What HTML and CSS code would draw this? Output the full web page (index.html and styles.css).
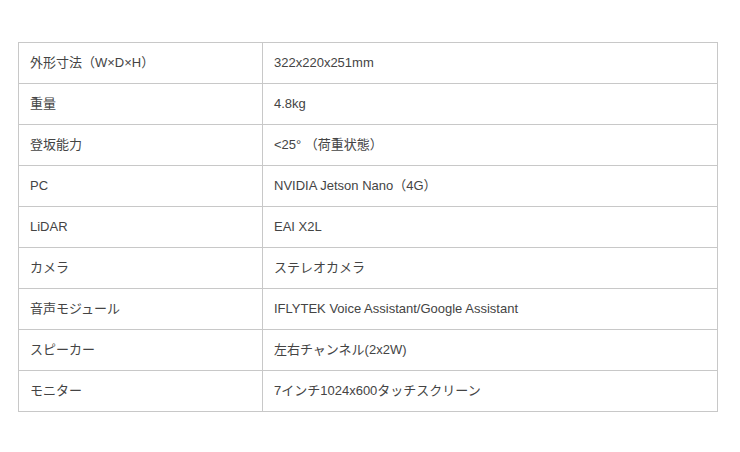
FILE: index.html
```html
<!DOCTYPE html>
<html lang="ja">
<head>
<meta charset="utf-8">
<link rel="stylesheet" href="styles.css">
</head>
<body>
<table class="spec">
<tbody>
<tr><th>外形寸法（W×D×H）</th><td>322x220x251mm</td></tr>
<tr><th>重量</th><td>4.8kg</td></tr>
<tr><th>登坂能力</th><td>&lt;25° （荷重状態）</td></tr>
<tr><th>PC</th><td>NVIDIA Jetson Nano（4G）</td></tr>
<tr><th>LiDAR</th><td>EAI X2L</td></tr>
<tr><th>カメラ</th><td>ステレオカメラ</td></tr>
<tr><th>音声モジュール</th><td>IFLYTEK Voice Assistant/Google Assistant</td></tr>
<tr><th>スピーカー</th><td>左右チャンネル(2x2W)</td></tr>
<tr><th>モニター</th><td>7インチ1024x600タッチスクリーン</td></tr>
</tbody>
</table>
</body>
</html>
```
FILE: styles.css
```css
html, body {
  margin: 0;
  padding: 0;
  background: #fff;
}
body {
  padding: 42px 0 0 18px;
  font-family: "Liberation Sans", Arial, "Noto Sans CJK JP", sans-serif;
  font-size: 13px;
  color: #444;
}
.spec {
  border-collapse: collapse;
  width: 700px;
  table-layout: fixed;
}
.spec th, .spec td {
  border: 1px solid #c8c8c8;
  height: 41px;
  padding: 0 11px;
  text-align: left;
  font-weight: normal;
  vertical-align: middle;
  box-sizing: border-box;
  line-height: 20px;
}
.spec th {
  width: 244px;
}
```
